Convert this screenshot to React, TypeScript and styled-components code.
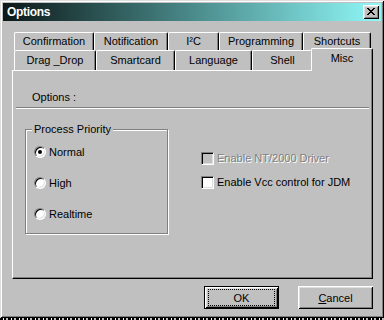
import React from "react";
import styled, { createGlobalStyle } from "styled-components";

const GlobalStyle = createGlobalStyle`
  html, body { margin: 0; padding: 0; }
  body {
    width: 384px;
    height: 320px;
    overflow: hidden;
    background: repeating-linear-gradient(90deg, #000 0 3px, #fff 3px 4px, #000 4px 6px, #c0c0c0 6px 8px);
    font-family: "Liberation Sans", Arial, sans-serif;
    font-size: 11px;
    color: #000;
  }
`;

const Window = styled.div`
  box-sizing: border-box;
  width: 384px;
  height: 318px;
  padding: 3px;
  background: #c0c0c0;
  box-shadow: inset 1px 1px #dfdfdf, inset -1px -1px #000, inset 2px 2px #fff,
    inset -2px -2px #808080;
  display: flex;
  flex-direction: column;
`;

const TitleBar = styled.div`
  height: 18px;
  display: flex;
  align-items: center;
  justify-content: space-between;
  padding: 0 2px 0 4px;
  background: linear-gradient(90deg, #0c1818 0%, #4a8a8a 50%, #90f8f8 100%);
`;

const TitleText = styled.span`
  color: #fff;
  font-weight: bold;
  font-size: 12px;
  letter-spacing: -0.3px;
  line-height: 14px;
`;

const CloseButton = styled.div`
  box-sizing: border-box;
  width: 16px;
  height: 14px;
  background: #c0c0c0;
  box-shadow: inset 1px 1px #fff, inset -1px -1px #000, inset 2px 2px #dfdfdf,
    inset -2px -2px #808080;
  display: flex;
  align-items: center;
  justify-content: center;
  padding: 0 1px 1px 0;
`;

const Body = styled.div`
  display: flex;
  flex-direction: column;
  padding: 11px 0 0 9px;
`;

const TabControl = styled.div`
  width: 361px;
  display: flex;
  flex-direction: column;
`;

const TabRow = styled.div<{ $h: number }>`
  display: flex;
  height: ${(p) => p.$h}px;
  padding-left: 2px;
`;

const Tab = styled.div<{ $w: number; $h: number; $selected?: boolean }>`
  box-sizing: border-box;
  flex: none;
  width: ${(p) => p.$w + (p.$selected ? 4 : 0)}px;
  height: ${(p) => p.$h + (p.$selected ? 3 : 0)}px;
  margin: ${(p) => (p.$selected ? "-2px -2px -1px -2px" : "0")};
  position: ${(p) => (p.$selected ? "relative" : "static")};
  z-index: ${(p) => (p.$selected ? 1 : 0)};
  background: #c0c0c0;
  border-top: 1px solid #fff;
  border-left: 1px solid #fff;
  border-right: 1px solid #000;
  border-radius: 2px 2px 0 0;
  box-shadow: inset -1px 0 #808080;
  display: flex;
  align-items: center;
  justify-content: center;
  padding-bottom: ${(p) => (p.$selected ? 4 : 0)}px;
  line-height: 13px;
  white-space: nowrap;
`;

const Panel = styled.div`
  box-sizing: border-box;
  width: 361px;
  height: 209px;
  border-top: 1px solid #fff;
  border-left: 1px solid #fff;
  border-right: 1px solid #000;
  border-bottom: 1px solid #000;
  box-shadow: inset -1px -1px #808080;
  display: flex;
  flex-direction: column;
`;

const SectionLabel = styled.div`
  margin: 20px 0 0 19px;
  line-height: 13px;
`;

const Separator = styled.div`
  margin: 3px 3px 0 3px;
  border-top: 1px solid #808080;
  border-bottom: 1px solid #fff;
`;

const ContentRow = styled.div`
  display: flex;
  align-items: flex-start;
  margin: 20px 0 0 12px;
`;

const GroupBox = styled.div`
  position: relative;
  box-sizing: border-box;
  width: 143px;
  height: 105px;
  border: 1px solid #808080;
  box-shadow: inset 1px 1px #fff, 1px 1px #fff;
  padding: 16px 0 0 8px;
  display: flex;
  flex-direction: column;
  gap: 19px;
`;

const GroupLabel = styled.span`
  position: absolute;
  top: -7px;
  left: 6px;
  padding: 0 2px;
  background: #c0c0c0;
  line-height: 13px;
`;

const RadioRow = styled.div`
  display: flex;
  align-items: center;
  height: 12px;
`;

const RadioCircle = styled.span<{ $checked?: boolean }>`
  position: relative;
  box-sizing: border-box;
  flex: none;
  width: 12px;
  height: 12px;
  border-radius: 50%;
  background: #fff;
  border: 1px solid;
  border-color: #808080 #fff #fff #808080;
  box-shadow: inset 1px 1px #000, inset -1px -1px #dfdfdf;
  &::after {
    content: "";
    display: ${(p) => (p.$checked ? "block" : "none")};
    position: absolute;
    left: 3px;
    top: 3px;
    width: 4px;
    height: 4px;
    border-radius: 50%;
    background: #000;
  }
`;

const ControlText = styled.span<{ $disabled?: boolean }>`
  margin-left: 3px;
  line-height: 13px;
  white-space: nowrap;
  color: ${(p) => (p.$disabled ? "#808080" : "#000")};
  text-shadow: ${(p) => (p.$disabled ? "1px 1px 0 #fff" : "none")};
`;

const CheckColumn = styled.div`
  display: flex;
  flex-direction: column;
  gap: 11px;
  margin: 23px 0 0 33px;
`;

const CheckRow = styled.div`
  display: flex;
  align-items: center;
  height: 13px;
`;

const CheckBox = styled.span<{ $disabled?: boolean }>`
  box-sizing: border-box;
  flex: none;
  width: 13px;
  height: 13px;
  background: ${(p) => (p.$disabled ? "#c0c0c0" : "#fff")};
  border: 1px solid;
  border-color: #808080 #fff #fff #808080;
  box-shadow: inset 1px 1px #000, inset -1px -1px #dfdfdf;
`;

const Footer = styled.div`
  width: 361px;
  display: flex;
  justify-content: flex-end;
  gap: 19px;
  margin-top: 7px;
`;

const Button = styled.button<{ $default?: boolean }>`
  position: relative;
  box-sizing: border-box;
  width: 75px;
  height: 23px;
  padding: 0;
  margin: 0;
  font-family: "Liberation Sans", Arial, sans-serif;
  font-size: 11px;
  color: #000;
  background: #c0c0c0;
  border: ${(p) => (p.$default ? "1px solid #000" : "none")};
  box-shadow: inset 1px 1px #fff, inset -1px -1px #000, inset 2px 2px #dfdfdf,
    inset -2px -2px #808080;
  &::after {
    content: "";
    display: ${(p) => (p.$default ? "block" : "none")};
    position: absolute;
    left: 3px;
    top: 2px;
    right: 3px;
    bottom: 2px;
    border: 1px dotted #000;
  }
`;

const CloseGlyph = () => (
  <svg width="8" height="7" viewBox="0 0 8 7" shapeRendering="crispEdges">
    <path
      d="M0 0h2v1h-2zM6 0h2v1h-2zM1 1h2v1h-2zM5 1h2v1h-2zM2 2h4v1h-4zM3 3h2v1h-2zM2 4h4v1h-4zM1 5h2v1h-2zM5 5h2v1h-2zM0 6h2v1h-2zM6 6h2v1h-2z"
      fill="#000"
    />
  </svg>
);

const row1 = [
  { label: "Confirmation", w: 80 },
  { label: "Notification", w: 74 },
  { label: "I²C", w: 51 },
  { label: "Programming", w: 84 },
  { label: "Shortcuts", w: 68 },
];

const row2 = [
  { label: "Drag _Drop", w: 82 },
  { label: "Smartcard", w: 79 },
  { label: "Language", w: 77 },
  { label: "Shell", w: 61 },
  { label: "Misc", w: 58, selected: true },
];

const radios = [
  { label: "Normal", checked: true },
  { label: "High" },
  { label: "Realtime" },
];

export default function App() {
  return (
    <>
      <GlobalStyle />
      <Window>
        <TitleBar>
          <TitleText>Options</TitleText>
          <CloseButton>
            <CloseGlyph />
          </CloseButton>
        </TitleBar>
        <Body>
          <TabControl>
            <TabRow $h={18}>
              {row1.map((t) => (
                <Tab key={t.label} $w={t.w} $h={18}>
                  {t.label}
                </Tab>
              ))}
            </TabRow>
            <TabRow $h={20}>
              {row2.map((t) => (
                <Tab key={t.label} $w={t.w} $h={20} $selected={t.selected}>
                  {t.label}
                </Tab>
              ))}
            </TabRow>
            <Panel>
              <SectionLabel>Options :</SectionLabel>
              <Separator />
              <ContentRow>
                <GroupBox>
                  <GroupLabel>Process Priority</GroupLabel>
                  {radios.map((r) => (
                    <RadioRow key={r.label}>
                      <RadioCircle $checked={r.checked} />
                      <ControlText>{r.label}</ControlText>
                    </RadioRow>
                  ))}
                </GroupBox>
                <CheckColumn>
                  <CheckRow>
                    <CheckBox $disabled />
                    <ControlText $disabled>Enable NT/2000 Driver</ControlText>
                  </CheckRow>
                  <CheckRow>
                    <CheckBox />
                    <ControlText>Enable Vcc control for JDM</ControlText>
                  </CheckRow>
                </CheckColumn>
              </ContentRow>
            </Panel>
          </TabControl>
          <Footer>
            <Button $default>OK</Button>
            <Button>
              <u>C</u>ancel
            </Button>
          </Footer>
        </Body>
      </Window>
    </>
  );
}
